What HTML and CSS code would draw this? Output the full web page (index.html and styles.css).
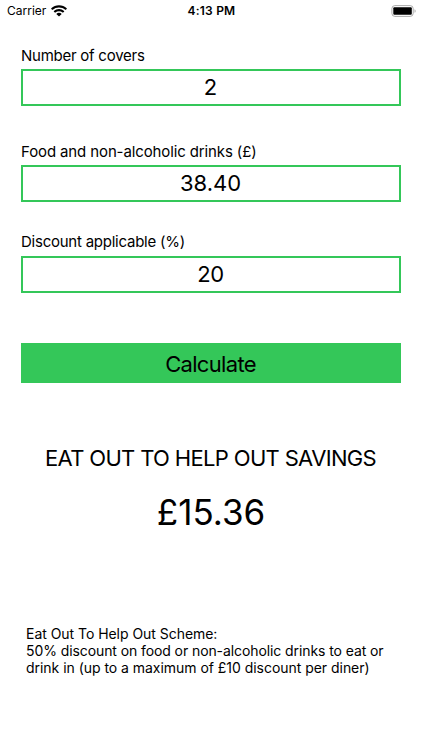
FILE: index.html
```html
<!DOCTYPE html>
<html lang="en">
<head>
<meta charset="utf-8">
<title>Eat Out To Help Out</title>
<link rel="stylesheet" href="styles.css">
</head>
<body>
<header class="status">
  <div class="carrier"><span class="carrier-name">Carrier</span>
    <svg class="wifi" viewBox="0 0 17 12" width="16" height="12"><path d="M8.5 0C5.3 0 2.4 1.2.3 3.2c-.2.2-.2.4 0 .6l1 1c.2.2.4.2.6 0A9.5 9.5 0 0 1 8.5 2.300c2.500 0 4.800.9 6.600 2.500.2.2.4.2.6 0l1-1c.2-.2.2-.4 0-.6C14.600 1.200 11.700 0 8.500 0Z"/><path d="M8.500 4c-2.100 0-4 .8-5.400 2.100-.2.200-.2.400 0 .6l1 1c.2.200.4.200.6 0a5.600 5.600 0 0 1 7.600 0c.2.200.4.200.6 0l1-1c.2-.2.2-.4 0-.6A7.900 7.900 0 0 0 8.500 4Z"/><path d="M8.500 7.800c-1 0-1.900.4-2.600 1-.2.200-.2.400 0 .6l2.300 2.300c.2.200.4.200.6 0l2.300-2.300c.2-.2.2-.4 0-.6-.7-.6-1.600-1-2.600-1Z"/></svg>
  </div>
  <div class="time">4:13 PM</div>
  <div class="power"><svg width="26" height="12" viewBox="0 0 26 12"><rect x="1.900" y=".6" width="21.300" height="10.800" rx="3" fill="none" stroke="#aaa"/><rect x="3.300" y="2.200" width="18.500" height="7.600" rx="1"/><path d="M24.600 4.200c1.300.5 1.300 3.100 0 3.600Z" fill="#999"/></svg></div>
</header>
<main>
  <label class="field"><span class="label covers">Number of covers</span><span class="box"><span class="v1">2</span></span></label>
  <label class="field food-field"><span class="label food">Food and non-alcoholic drinks (£)</span><span class="box"><span class="v2">38.40</span></span></label>
  <label class="field discount-field"><span class="label discount">Discount applicable (%)</span><span class="box"><span class="v3">20</span></span></label>
  <button class="calculate"><span>Calculate</span></button>
  <h1>EAT OUT TO HELP OUT SAVINGS</h1>
  <div class="amount">£15.36</div>
  <p class="note"><span class="n1">Eat Out To Help Out Scheme:</span><br><span class="n2">50% discount on food or non-alcoholic drinks to eat or</span><br><span class="n3">drink in (up to a maximum of £10 discount per diner)</span></p>
</main>
</body>
</html>
```
FILE: styles.css
```css
* { box-sizing: border-box; }
body { margin: 0; width: 422px; height: 750px; overflow: hidden; background: #fff; color: #000; font-family: Inter, "Liberation Sans", sans-serif; }
.status { display: grid; grid-template-columns: 1fr auto 1fr; height: 22px; padding: 0 6px 1px 7px; align-items: center; font-size: 12px; line-height: 15px; }
.carrier { display: flex; align-items: center; gap: 5px; }
.time { font-weight: 600; letter-spacing: .2px; }
.power { display: flex; justify-content: flex-end; }
main { padding: 23px 21px 0; }
.field { display: block; height: 83px; }
.label { display: block; height: 24px; line-height: 22px; font-size: 15px; white-space: nowrap; }
.covers { letter-spacing: -.25px; }
.food { letter-spacing: -.12px; }
.discount { letter-spacing: -.24px; line-height: 20px; }
.box { display: flex; align-items: center; justify-content: center; height: 37px; padding: 0 1px 2px 0; border: 2px solid #34c759; font-size: 22px; }
.v3 { letter-spacing: -.5px; }
.food-field { margin-top: 13px; }
.discount-field { margin-top: 8px; }
.calculate { display: block; width: 380px; height: 40px; margin-top: 28px; padding: 1px 1px 0 0; border: 0; background: #34c759; color: #000; font: 22px/40px Inter, sans-serif; letter-spacing: -.68px; }
h1 { margin: 61px 0 0; padding-right: 1px; font-size: 22px; font-weight: 400; line-height: 28px; letter-spacing: -.66px; text-align: center; white-space: nowrap; }
.amount { margin-top: 19px; font-size: 35px; line-height: 42px; text-align: center; }
.note { margin: 92px 0 0 5px; font-size: 14px; line-height: 17px; white-space: nowrap; }
.n1 { letter-spacing: -.04px; }
.n2 { letter-spacing: -.09px; }
.n3 { letter-spacing: -.035px; }
```
